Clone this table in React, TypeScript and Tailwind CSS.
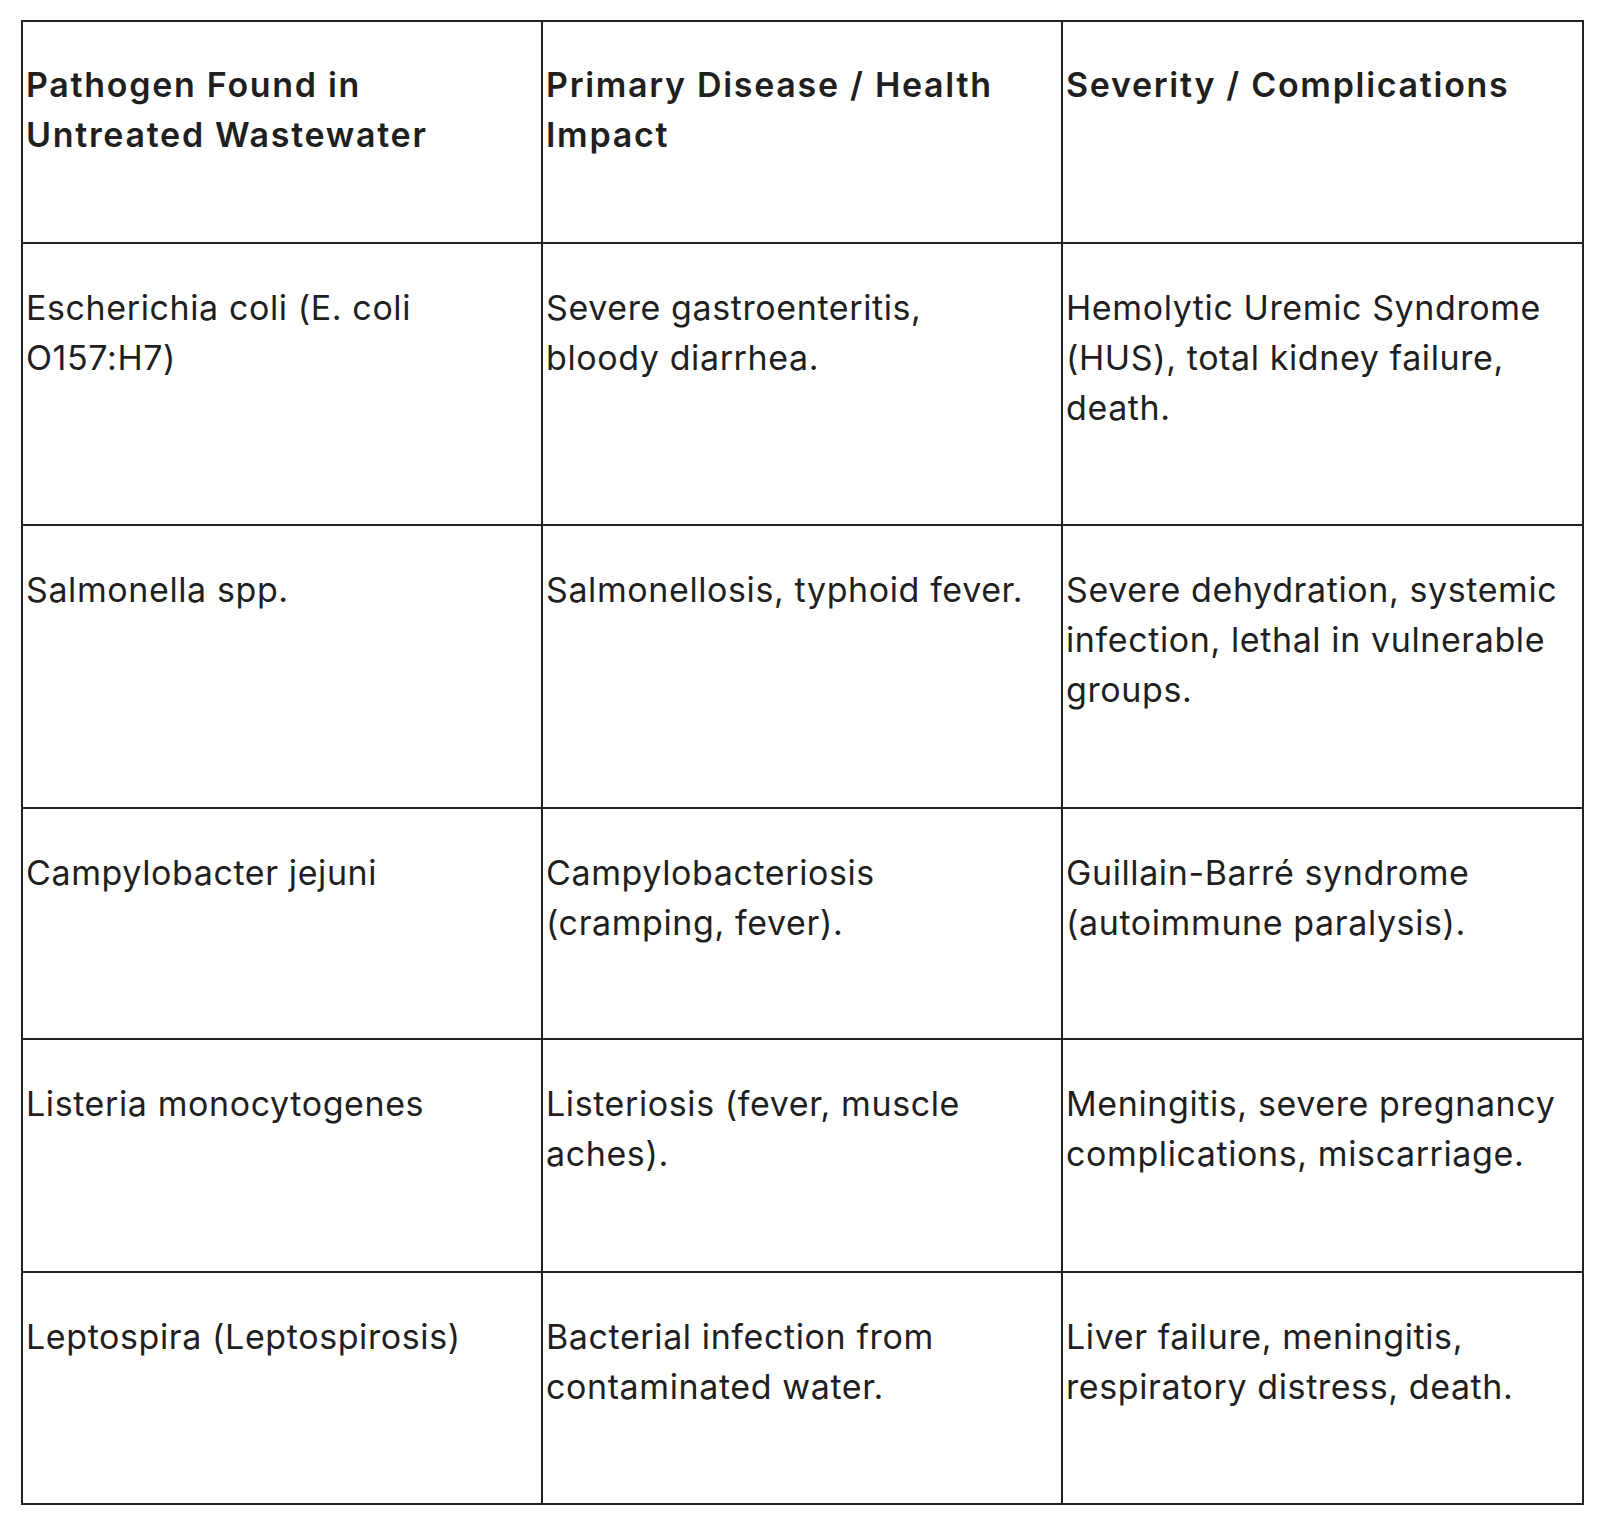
import React from "react";

type Row = { h: string; cells: string[][] };

const header: string[][] = [
  ["Pathogen Found in", "Untreated Wastewater"],
  ["Primary Disease / Health", "Impact"],
  ["Severity / Complications"],
];

const rows: Row[] = [
  {
    h: "h-[282px]",
    cells: [
      ["Escherichia coli (E. coli", "O157:H7)"],
      ["Severe gastroenteritis,", "bloody diarrhea."],
      ["Hemolytic Uremic Syndrome", "(HUS), total kidney failure,", "death."],
    ],
  },
  {
    h: "h-[283px]",
    cells: [
      ["Salmonella spp."],
      ["Salmonellosis, typhoid fever."],
      ["Severe dehydration, systemic", "infection, lethal in vulnerable", "groups."],
    ],
  },
  {
    h: "h-[231px]",
    cells: [
      ["Campylobacter jejuni"],
      ["Campylobacteriosis", "(cramping, fever)."],
      ["Guillain-Barré syndrome", "(autoimmune paralysis)."],
    ],
  },
  {
    h: "h-[233px]",
    cells: [
      ["Listeria monocytogenes"],
      ["Listeriosis (fever, muscle", "aches)."],
      ["Meningitis, severe pregnancy", "complications, miscarriage."],
    ],
  },
  {
    h: "h-[232px]",
    cells: [
      ["Leptospira (Leptospirosis)"],
      ["Bacterial infection from", "contaminated water."],
      ["Liver failure, meningitis,", "respiratory distress, death."],
    ],
  },
];

function Lines({ lines }: { lines: string[] }) {
  return (
    <>
      {lines.map((l, i) => (
        <div key={i} className="whitespace-nowrap">
          {l}
        </div>
      ))}
    </>
  );
}

export default function App() {
  return (
    <div
      className="w-[1600px] h-[1519px] bg-white pt-[20px] pl-[21px] text-[#1f1f1f]"
      style={{ fontFamily: "Inter, Roboto, 'Noto Sans', sans-serif" }}
    >
      <table className="table-fixed border-collapse w-[1561px]">
        <colgroup>
          <col className="w-[520px]" />
          <col className="w-[520px]" />
          <col className="w-[521px]" />
        </colgroup>
        <thead>
          <tr className="h-[222px]">
            {header.map((c, i) => (
              <th
                key={i}
                className="border-2 border-[#222] align-top text-left font-semibold text-[34px] leading-[50px] tracking-[1.7px] pl-[3px] pt-[38px]"
              >
                <Lines lines={c} />
              </th>
            ))}
          </tr>
        </thead>
        <tbody>
          {rows.map((r, ri) => (
            <tr key={ri} className={r.h}>
              {r.cells.map((c, ci) => (
                <td
                  key={ci}
                  className="border-2 border-[#222] align-top text-left font-normal text-[34px] leading-[50px] tracking-[0.6px] pl-[3px] pt-[39px]"
                >
                  <Lines lines={c} />
                </td>
              ))}
            </tr>
          ))}
        </tbody>
      </table>
    </div>
  );
}
